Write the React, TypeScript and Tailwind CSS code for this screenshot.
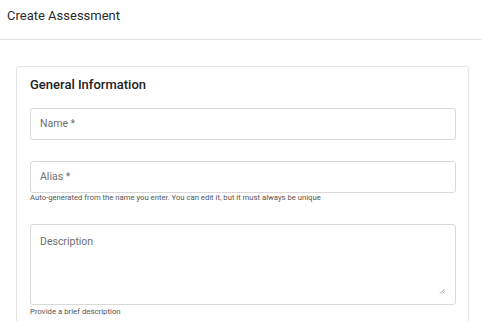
import React from "react";

export default function App() {
  return (
    <div className="w-[482px] h-[321px] overflow-hidden bg-white" style={{ fontFamily: "Roboto, 'Liberation Sans', sans-serif" }}>
      <div className="h-[40px] border-b border-[#e2e2e2] pl-[7px] pt-[8px]">
        <div className="text-[13px] leading-[16px] text-[#2b2b2b]">Create Assessment</div>
      </div>
      <div className="mt-[26px] ml-[16px] mr-[13px] border border-[#e3e3e3] rounded-[3px] pt-[10px] pl-[13px] pr-[12px] pb-[40px]">
        <div className="text-[13px] leading-[16px] font-medium text-[#222]">General Information</div>
        <div className="mt-[15px] h-[32px] border border-[#d9d9d9] rounded-[3px] flex items-center pl-[9px]">
          <span className="text-[10.5px] text-[#6f6f6f]">Name *</span>
        </div>
        <div className="mt-[21px] h-[32px] border border-[#d9d9d9] rounded-[3px] flex items-center pl-[9px]">
          <span className="text-[10.5px] text-[#6f6f6f]">Alias *</span>
        </div>
        <div className="text-[7.7px] leading-[8px] text-[#555] mt-[1px]">
          Auto-generated from the name you enter. You can edit it, but it must always be unique
        </div>
        <div className="relative mt-[22px] h-[81px] border border-[#d9d9d9] rounded-[3px] pl-[9px] pt-[10px]">
          <div className="text-[10.5px] leading-[13px] text-[#6f6f6f]">Description</div>
          <svg className="absolute right-[10px] bottom-[10px]" width="6" height="6" viewBox="0 0 6 6">
            <line x1="1" y1="5.5" x2="5.5" y2="1" stroke="#999" strokeWidth="0.9" />
            <line x1="3.5" y1="5.5" x2="5.5" y2="3.5" stroke="#999" strokeWidth="0.9" />
          </svg>
        </div>
        <div className="text-[7.8px] leading-[8px] text-[#555] mt-[3px]">Provide a brief description</div>
      </div>
    </div>
  );
}
